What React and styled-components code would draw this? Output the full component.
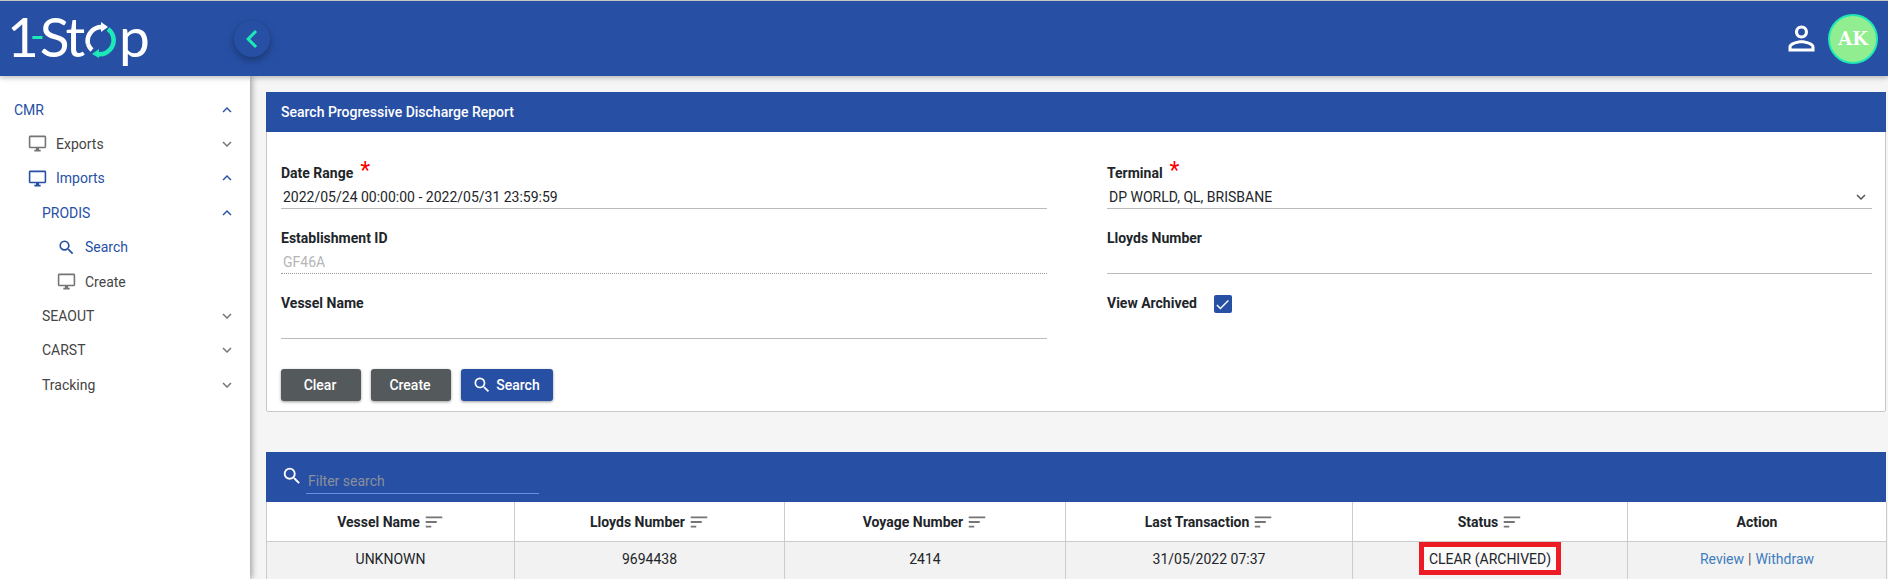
import styled, { createGlobalStyle } from "styled-components";
import {
    MdExpandLess,
    MdExpandMore,
    MdOutlineDesktopWindows,
    MdSearch,
    MdPersonOutline,
    MdChevronLeft,
    MdSort,
    MdCheck,
} from "react-icons/md";

const GlobalStyle = createGlobalStyle`
    html, body {
        margin: 0;
        padding: 0;
        height: 579px;
        overflow: hidden;
        background: #f5f5f5;
        font-family: Roboto, "Liberation Sans", sans-serif;
        font-size: 14px;
        color: #212529;
    }
    * { box-sizing: border-box; }
`;

const BLUE = "#2750a5";

const Page = styled.div`
    display: flex;
    flex-direction: column;
    height: 579px;
    overflow: hidden;
    border-top: 1px solid #c4c4c0;
`;

const Header = styled.header`
    display: flex;
    align-items: center;
    height: 75px;
    flex: none;
    background: ${BLUE};
    box-shadow: 0 2px 5px rgba(0, 0, 0, 0.25);
    position: relative;
    z-index: 2;
    padding-right: 10px;
`;

const Logo = styled.div`
    display: flex;
    align-items: baseline;
    width: 234px;
    flex: none;
    padding-left: 7px;
    height: 75px;
    line-height: 70px;
    font-family: Lato, sans-serif;
    font-size: 55px;
    font-weight: 400;
    color: #fff;
    letter-spacing: -3px;
`;

const LogoOne = styled.span`
    letter-spacing: -9px;
`;

const LogoDash = styled.span`
    color: #1de9b6;
    font-size: 40px;
    letter-spacing: -5px;
    transform: translateY(-7px);
`;

const LogoRing = styled.svg`
    width: 34px;
    height: 38px;
    margin: 0 1px 0 2px;
    align-self: center;
`;

const CollapseButton = styled.button`
    width: 36px;
    height: 36px;
    flex: none;
    padding: 0;
    border: 0;
    border-radius: 50%;
    background: ${BLUE};
    color: #1de9b6;
    display: flex;
    align-items: center;
    justify-content: center;
    box-shadow: 0 3px 8px rgba(0, 0, 0, 0.35);
`;

const HeaderEnd = styled.div`
    margin-left: auto;
    display: flex;
    align-items: center;
    gap: 7px;
    color: #fff;
`;

const Avatar = styled.div`
    width: 50px;
    height: 50px;
    border-radius: 50%;
    background: #90ee90;
    border: 2px solid #1de9b6;
    color: #fff;
    display: flex;
    align-items: center;
    justify-content: center;
    font-family: "DejaVu Serif", serif;
    font-weight: 700;
    font-size: 18px;
`;

const Body = styled.div`
    display: flex;
    flex: 1;
    min-height: 0;
`;

const Sidebar = styled.nav`
    width: 250px;
    flex: none;
    background: #fff;
    padding-top: 16.4px;
    box-shadow: 2px 0 6px rgba(0, 0, 0, 0.35);
    position: relative;
    z-index: 1;
`;

const NavRow = styled.div`
    display: flex;
    align-items: center;
    height: 34.4px;
    padding-left: ${(p) => p.$indent}px;
    padding-right: 14px;
    color: ${(p) => (p.$active ? BLUE : "#444")};
    svg.lead {
        color: ${(p) => (p.$active ? BLUE : "#757575")};
        margin-right: 9px;
    }
    svg.arrow {
        margin-left: auto;
        color: ${(p) => (p.$active ? BLUE : "#757575")};
    }
`;

const Main = styled.main`
    flex: 1;
    min-width: 0;
    padding: 16px 2px 0 16px;
`;

const Card = styled.section`
    background: #fff;
    border: 1px solid #c8c8c8;
    border-radius: 2px;
    height: 320px;
`;

const CardTitle = styled.div`
    height: 40px;
    margin: -1px -1px 0;
    padding-left: 15px;
    display: flex;
    align-items: center;
    background: ${BLUE};
    color: #fff;
    font-weight: 500;
`;

const CardBody = styled.div`
    padding: 31px 14px 0;
`;

const FormGrid = styled.div`
    display: grid;
    grid-template-columns: 766px 765px;
    column-gap: 60px;
    row-gap: 19px;
`;

const Field = styled.div`
    display: flex;
    flex-direction: column;
    height: 46px;
`;

const Label = styled.label`
    font-weight: 700;
    height: 20px;
    line-height: 20px;
    color: #212529;
`;

const Star = styled.span`
    color: #f00;
    font-size: 23px;
    font-weight: 400;
    margin-left: 7px;
    line-height: 14px;
`;

const Value = styled.div`
    flex: 1;
    display: flex;
    align-items: center;
    justify-content: space-between;
    padding: 3px 2px 0;
    color: ${(p) => (p.$disabled ? "#b5b5b5" : "#212529")};
    border-bottom: 1px ${(p) => (p.$disabled ? "dotted #999" : "solid #bbb")};
`;

const CheckRow = styled.div`
    display: flex;
    align-items: flex-start;
`;

const CheckBox = styled.span`
    width: 18px;
    height: 18px;
    margin-left: 17px;
    margin-top: 2px;
    border-radius: 2px;
    background: ${BLUE};
    color: #fff;
    display: flex;
    align-items: center;
    justify-content: center;
`;

const Buttons = styled.div`
    display: flex;
    gap: 10px;
    margin-top: 30px;
`;

const Button = styled.button`
    height: 32px;
    width: ${(p) => p.$width}px;
    border: 0;
    border-radius: 3px;
    background: ${(p) => (p.$primary ? BLUE : "#54595c")};
    color: #fff;
    font-family: inherit;
    font-size: 14px;
    font-weight: 500;
    display: flex;
    align-items: center;
    justify-content: center;
    gap: 4px;
    padding: 0 2px 0 0;
    box-shadow: 0 1px 3px rgba(0, 0, 0, 0.4);
`;

const ResultPanel = styled.section`
    margin-top: 40px;
`;

const Toolbar = styled.div`
    height: 50px;
    background: ${BLUE};
    display: flex;
    align-items: flex-start;
    padding: 13px 0 0 15px;
    color: #fff;
`;

const FilterInput = styled.div`
    width: 233px;
    height: 29px;
    margin-left: 3px;
    padding: 8px 0 0 2px;
    line-height: 16px;
    color: #8a8f9a;
    border-bottom: 1px solid #6a8fe0;
`;

const Table = styled.div`
    display: grid;
    grid-template-columns: 248px 270px 281px 287px 275px 259px;
    background: #fff;
    border-left: 1px solid #ccc;
`;

const HeadCell = styled.div`
    height: 40px;
    display: flex;
    align-items: center;
    justify-content: center;
    gap: 3px;
    font-weight: 700;
    border-right: 1px solid #ccc;
    border-bottom: 1px solid #ccc;
    svg {
        color: #757575;
        margin-right: -1px;
    }
`;

const Cell = styled.div`
    height: 40px;
    display: flex;
    align-items: flex-start;
    justify-content: center;
    padding-top: 9px;
    background: #f2f2f2;
    border-right: 1px solid #ccc;
`;

const StatusFlag = styled.span`
    margin-top: -9px;
    height: 33px;
    padding: 0 5px;
    border: 5px solid #ed1c24;
    background: #fafafa;
    display: flex;
    align-items: center;
`;

const TableLink = styled.a`
    color: #3f7cbf;
`;

const Divider = styled.span`
    margin: 0 4px;
    color: #555;
`;

const navItems = [
    { label: "CMR", indent: 14, active: true, arrow: "up" },
    { label: "Exports", indent: 28, lead: "screen", arrow: "down" },
    { label: "Imports", indent: 28, lead: "screen", active: true, arrow: "up" },
    { label: "PRODIS", indent: 42, active: true, arrow: "up" },
    { label: "Search", indent: 57, lead: "search", active: true },
    { label: "Create", indent: 57, lead: "screen" },
    { label: "SEAOUT", indent: 42, arrow: "down" },
    { label: "CARST", indent: 42, arrow: "down" },
    { label: "Tracking", indent: 42, arrow: "down" },
];

const columns = ["Vessel Name", "Lloyds Number", "Voyage Number", "Last Transaction", "Status"];

const SideNav = () => (
    <Sidebar>
        {navItems.map((item) => (
            <NavRow key={item.label} $indent={item.indent} $active={item.active}>
                {item.lead === "screen" && <MdOutlineDesktopWindows className="lead" size={19} />}
                {item.lead === "search" && <MdSearch className="lead" size={19} />}
                {item.label}
                {item.arrow === "up" && <MdExpandLess className="arrow" size={18} />}
                {item.arrow === "down" && <MdExpandMore className="arrow" size={18} />}
            </NavRow>
        ))}
    </Sidebar>
);

const SearchCard = () => (
    <Card>
        <CardTitle>Search Progressive Discharge Report</CardTitle>
        <CardBody>
            <FormGrid>
                <Field>
                    <Label>Date Range<Star>*</Star></Label>
                    <Value>2022/05/24 00:00:00 - 2022/05/31 23:59:59</Value>
                </Field>
                <Field>
                    <Label>Terminal<Star>*</Star></Label>
                    <Value>
                        DP WORLD, QL, BRISBANE
                        <MdExpandMore size={18} color="#555" />
                    </Value>
                </Field>
                <Field>
                    <Label>Establishment ID</Label>
                    <Value $disabled>GF46A</Value>
                </Field>
                <Field>
                    <Label>Lloyds Number</Label>
                    <Value />
                </Field>
                <Field>
                    <Label>Vessel Name</Label>
                    <Value />
                </Field>
                <CheckRow>
                    <Label>View Archived</Label>
                    <CheckBox><MdCheck size={17} /></CheckBox>
                </CheckRow>
            </FormGrid>
            <Buttons>
                <Button $width={80}>Clear</Button>
                <Button $width={80}>Create</Button>
                <Button $width={92} $primary><MdSearch size={20} />Search</Button>
            </Buttons>
        </CardBody>
    </Card>
);

const Results = () => (
    <ResultPanel>
        <Toolbar>
            <MdSearch size={22} />
            <FilterInput>Filter search</FilterInput>
        </Toolbar>
        <Table>
            {columns.map((name) => (
                <HeadCell key={name}>{name}<MdSort size={22} /></HeadCell>
            ))}
            <HeadCell>Action</HeadCell>
            <Cell>UNKNOWN</Cell>
            <Cell>9694438</Cell>
            <Cell>2414</Cell>
            <Cell>31/05/2022 07:37</Cell>
            <Cell><StatusFlag>CLEAR (ARCHIVED)</StatusFlag></Cell>
            <Cell>
                <TableLink>Review</TableLink>
                <Divider>|</Divider>
                <TableLink>Withdraw</TableLink>
            </Cell>
        </Table>
    </ResultPanel>
);

export default function App() {
    return (
        <Page>
            <GlobalStyle />
            <Header>
                <Logo>
                    <LogoOne>1</LogoOne>
                    <LogoDash>-</LogoDash>
                    St
                    <LogoRing viewBox="0 0 34 38">
                        <path d="M4 24 A14 14 0 0 1 19 7" fill="none" stroke="#fff" strokeWidth="4.5" />
                        <path d="M17 2 L24 7 L17 12 Z" fill="#fff" />
                        <path d="M24 9 A14 14 0 0 1 13 34" fill="none" stroke="#1de9b6" strokeWidth="4.5" />
                        <path d="M15 29 L8 34 L15 38 Z" fill="#1de9b6" />
                        <path d="M4 24 A14 14 0 0 0 8 30" fill="none" stroke="#fff" strokeWidth="4.5" />
                    </LogoRing>
                    p
                </Logo>
                <CollapseButton><MdChevronLeft size={36} /></CollapseButton>
                <HeaderEnd>
                    <MdPersonOutline size={39} />
                    <Avatar>AK</Avatar>
                </HeaderEnd>
            </Header>
            <Body>
                <SideNav />
                <Main>
                    <SearchCard />
                    <Results />
                </Main>
            </Body>
        </Page>
    );
}
